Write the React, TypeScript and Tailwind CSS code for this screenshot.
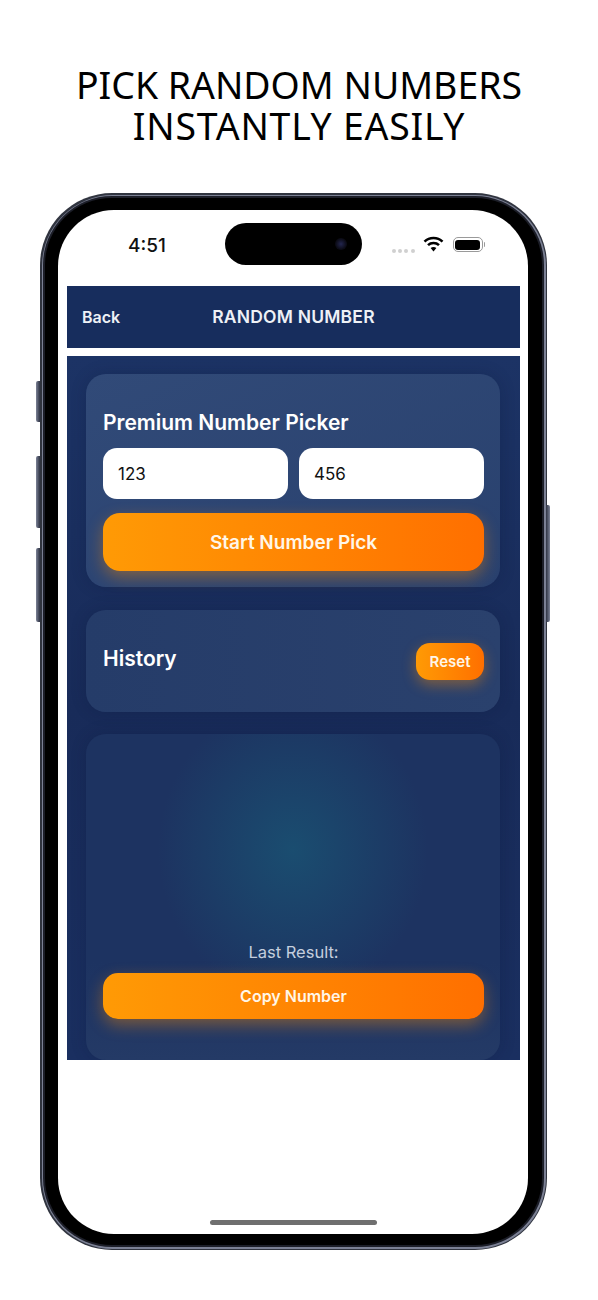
const sans = 'font-["Inter",_"Liberation_Sans",_sans-serif]'

function SideButton({ className }: { className: string }) {
  return <div className={`absolute w-[4px] rounded-l-[2px] bg-gradient-to-r from-[#7d8397] to-[#2f3444] ${className}`} />
}

function WifiIcon() {
  return (
    <svg width="21" height="16" viewBox="0 0 21 16" fill="none" className="ml-[8px] -mt-[4px]">
      <path d="M1.5 5.6C6.5 0.8 14.5 0.8 19.5 5.6" stroke="black" strokeWidth="2.6" />
      <path d="M5 9.1C8 6.3 13 6.3 16 9.1" stroke="black" strokeWidth="2.6" />
      <path d="M7.6 12C9.3 10.7 11.7 10.7 13.4 12L10.5 15.5Z" fill="black" />
    </svg>
  )
}

export default function App() {
  return (
    <div className={`w-[598px] h-[1300px] bg-white overflow-hidden ${sans}`}>
      <h1 className="h-[147px] pt-[64px] text-center text-[37.4px] leading-[41px] font-normal text-black font-['Noto_Sans',_sans-serif]">
        PICK RANDOM NUMBERS
        <br />
        <span className="tracking-[0.8px]">INSTANTLY EASILY</span>
      </h1>

      {/* Phone frame */}
      <div className="relative mt-[46px] ml-[40px] w-[507px] h-[1057px] rounded-[72px] bg-[#30343f] p-[1.5px]">
        <SideButton className="-left-[4px] top-[188px] h-[41px]" />
        <SideButton className="-left-[4px] top-[263px] h-[72px]" />
        <SideButton className="-left-[4px] top-[355px] h-[74px]" />
        <SideButton className="-right-[3px] top-[312px] h-[117px] rotate-180" />

        <div className="h-full w-full rounded-[71px] bg-[#7b8094] p-[1.5px]">
          <div className="h-full w-full rounded-[69px] bg-[#1c1e28] p-[2px]">
            <div className="h-full w-full rounded-[67px] bg-black pt-[12px] pr-[14px] pb-[11px] pl-[13px]">
              <div className="relative h-full w-full overflow-hidden rounded-[56px] bg-white">
                {/* Status bar */}
                <div className="flex h-[76px] items-start">
                  <span className="mt-[25px] ml-[70px] text-[19px] leading-[22px] font-medium text-[#111]">4:51</span>
                  <div className="mt-[13px] ml-[59px] flex h-[42px] w-[137px] items-center justify-end rounded-full bg-black pr-[15px]">
                    <span className="h-[12px] w-[12px] rounded-full bg-[radial-gradient(circle,_#23264f_0%,_#0c0c18_60%,_#050508_100%)]" />
                  </div>
                  <div className="mt-[29px] ml-[30px] flex items-center">
                    <div className="mt-[10px] flex gap-[2.3px]">
                      <span className="h-[4px] w-[4px] rounded-full bg-[#d0d0d0]" />
                      <span className="h-[4px] w-[4px] rounded-full bg-[#d0d0d0]" />
                      <span className="h-[4px] w-[4px] rounded-full bg-[#d0d0d0]" />
                      <span className="h-[4px] w-[4px] rounded-full bg-[#d0d0d0]" />
                    </div>
                    <WifiIcon />
                    <div className="ml-[9px] -mt-[3px] flex items-center">
                      <div className="h-[15px] w-[30px] rounded-[5px] border border-[#9a9a9a] p-[1.5px]">
                        <div className="h-full w-full rounded-[3px] bg-black" />
                      </div>
                      <div className="ml-[1px] h-[5px] w-[1.5px] rounded-r-full bg-[#9a9a9a]" />
                    </div>
                  </div>
                </div>

                <div className="mr-[8px] ml-[9px]">
                  {/* Nav bar */}
                  <div className="relative flex h-[62px] items-center bg-[#172d5d] pl-[15px]">
                    <span className="text-[16px] font-semibold text-[#eef1f6]">Back</span>
                    <span className="absolute inset-x-0 pt-[1px] text-center text-[17.5px] font-semibold tracking-[0.2px] text-[#eef1f6]">RANDOM NUMBER</span>
                  </div>

                  {/* Content */}
                  <div className="mt-[8px] flex h-[704px] flex-col gap-[22px] overflow-hidden bg-gradient-to-b from-[#1c3365] via-[#182b59] to-[#1a2f60] pt-[18px] pr-[20px] pl-[19px]">
                    <div className="rounded-[20px] bg-gradient-to-br from-[#314a78] to-[#29416e] pt-[34px] pr-[16px] pb-[16px] pl-[17px] shadow-[0_0_16px_rgba(10,20,50,0.2)]">
                      <h2 className="pt-[1px] text-[21px] leading-[27px] font-semibold text-white">Premium Number Picker</h2>
                      <div className="mt-[12px] flex gap-[11px]">
                        <div className="flex h-[51px] flex-1 items-center rounded-[14px] bg-white pt-[2px] pl-[15px] text-[17px] text-[#111]">123</div>
                        <div className="flex h-[51px] flex-1 items-center rounded-[14px] bg-white pt-[2px] pl-[15px] text-[17px] text-[#111]">456</div>
                      </div>
                      <button className="mt-[14px] h-[58px] w-full rounded-[17px] bg-gradient-to-r from-[#ff9a05] to-[#ff6f00] pt-[2px] text-[19px] font-semibold text-[#fff6e8] shadow-[0_6px_16px_rgba(255,140,0,0.4)]">
                        Start Number Pick
                      </button>
                    </div>

                    <div className="mt-[1px] flex h-[102px] shrink-0 items-center justify-between rounded-[20px] bg-gradient-to-r from-[#253c69] to-[#2a416d] pr-[16px] pl-[17px] shadow-[0_0_16px_rgba(10,20,50,0.2)]">
                      <h2 className="pb-[4px] text-[21px] font-semibold text-white">History</h2>
                      <button className="h-[37px] w-[68px] rounded-[14px] bg-gradient-to-r from-[#ff9a05] to-[#ff6f00] pt-[2px] text-[15px] font-semibold text-[#fff6e8] shadow-[0_5px_14px_rgba(255,140,0,0.4)]">
                        Reset
                      </button>
                    </div>

                    <div className="flex h-[326px] shrink-0 flex-col justify-end rounded-[20px] bg-[radial-gradient(ellipse_135px_150px_at_207px_116px,_#1a4d70_0%,_rgba(26,77,112,0)_100%),linear-gradient(to_bottom,_#1d3361,_#1d3361_70%,_#243a66)] pr-[16px] pb-[41px] pl-[17px] shadow-[0_0_16px_rgba(10,20,50,0.2)]">
                      <p className="text-center text-[16.5px] leading-[22px] text-[#c4cede]">Last Result:</p>
                      <button className="mt-[10px] h-[46px] w-full shrink-0 rounded-[15px] bg-gradient-to-r from-[#ff9a05] to-[#ff6f00] text-[16px] font-semibold text-[#fff6e8] shadow-[0_6px_16px_rgba(255,140,0,0.4)]">
                        Copy Number
                      </button>
                    </div>
                  </div>
                </div>

                {/* Home indicator */}
                <div className="absolute bottom-[9px] left-[152px] h-[5px] w-[167px] rounded-full bg-[#6f6f6f]" />
              </div>
            </div>
          </div>
        </div>
      </div>
    </div>
  )
}
